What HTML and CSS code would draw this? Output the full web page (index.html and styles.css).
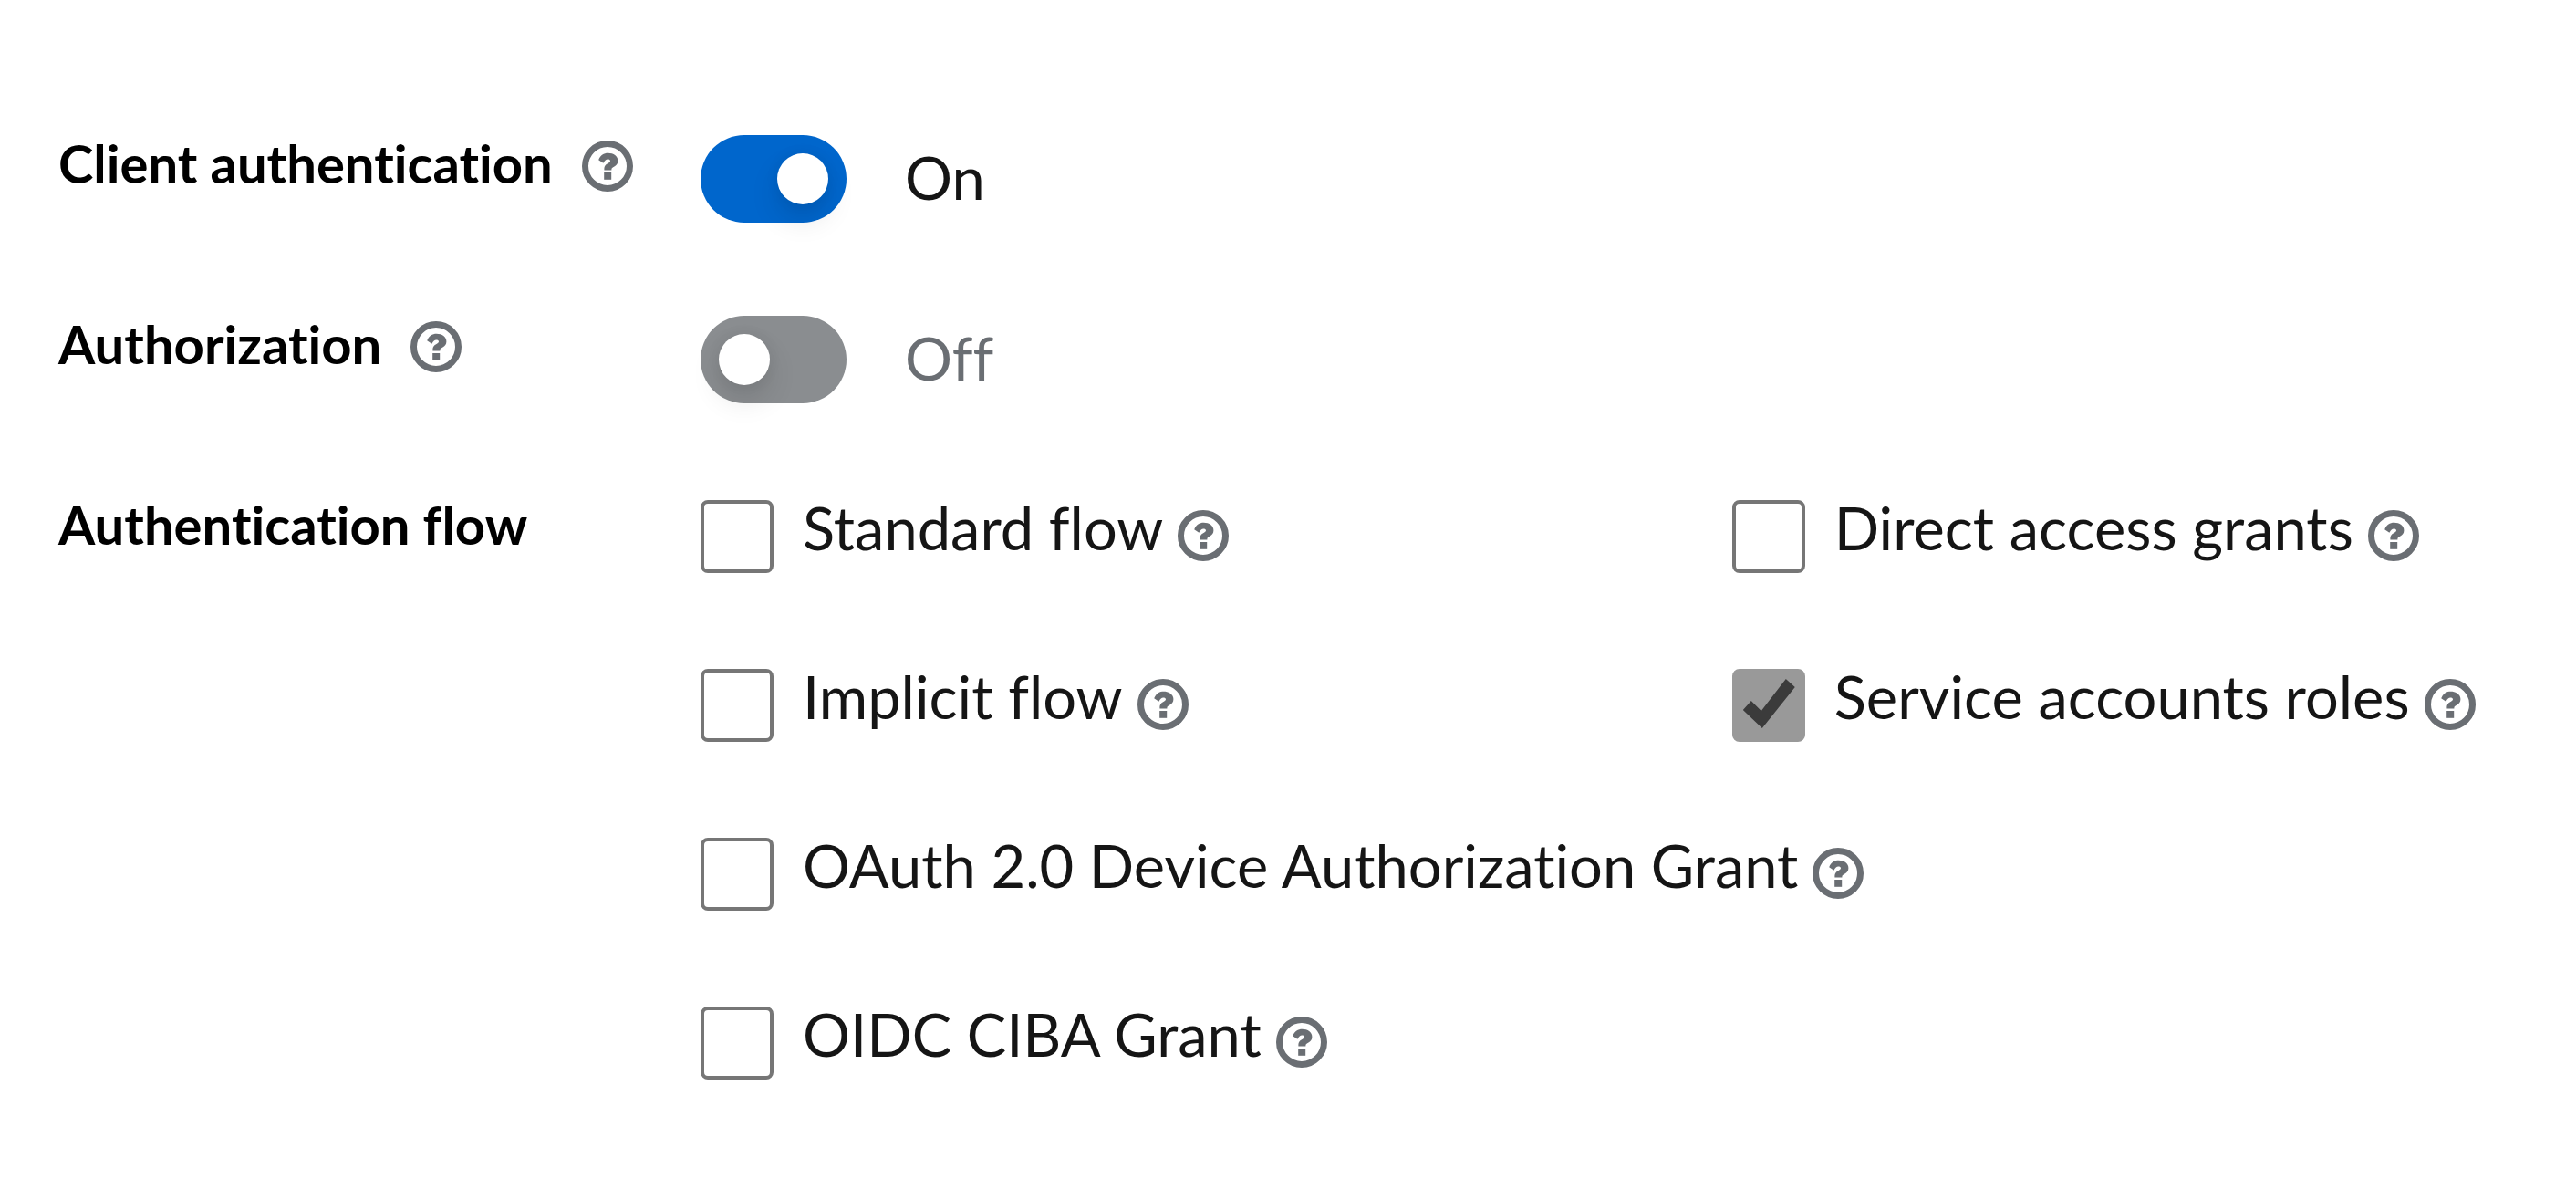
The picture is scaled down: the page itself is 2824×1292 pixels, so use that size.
FILE: index.html
```html
<!DOCTYPE html>
<html lang="en">
<head>
<meta charset="utf-8">
<meta name="viewport" content="width=device-width, initial-scale=1">
<title>Capability config</title>
<link rel="stylesheet" href="styles.css">
</head>
<body>
<svg class="sprite" aria-hidden="true">
  <symbol id="help" viewBox="0 0 56 56">
    <circle cx="28" cy="28" r="24.5" fill="none" stroke="currentColor" stroke-width="7"/>
    <path d="M18.2 21.2C20.4 16 23.8 13.8 28.6 13.8C34.6 13.8 39.4 17.2 39.4 22.2C39.4 28.6 32.4 28.8 32.4 31.4V32.6H24.4V30.6C24.4 25.2 31 24.8 31 22.4C31 21 29.8 20.4 28.2 20.4C26.4 20.4 25.2 21.4 23.4 24.8Z" fill="currentColor"/>
    <rect x="24.2" y="35" width="8" height="7.8" fill="currentColor"/>
  </symbol>
</svg>
<form class="form">
  <div class="form-row">
    <div class="form-label">
      <label for="client-auth">Client authentication</label>
      <button class="help" type="button" aria-label="Help for client authentication"><svg><use href="#help"/></svg></button>
    </div>
    <div class="switch">
      <input class="switch-input" type="checkbox" role="switch" id="client-auth" checked>
      <label class="switch-text" for="client-auth">On</label>
    </div>
  </div>
  <div class="form-row">
    <div class="form-label">
      <label for="authorization">Authorization</label>
      <button class="help" type="button" aria-label="Help for authorization"><svg><use href="#help"/></svg></button>
    </div>
    <div class="switch">
      <input class="switch-input" type="checkbox" role="switch" id="authorization">
      <label class="switch-text switch-text-off" for="authorization">Off</label>
    </div>
  </div>
  <div class="form-row" role="group" aria-labelledby="flow-label">
    <div class="form-label"><span id="flow-label">Authentication flow</span></div>
    <div class="flows">
      <div class="check">
        <input class="check-input" type="checkbox" id="standard">
        <label for="standard">Standard flow</label>
        <button class="help" type="button" aria-label="Help for standard flow"><svg><use href="#help"/></svg></button>
      </div>
      <div class="check">
        <input class="check-input" type="checkbox" id="direct">
        <label for="direct">Direct access grants</label>
        <button class="help" type="button" aria-label="Help for direct access grants"><svg><use href="#help"/></svg></button>
      </div>
      <div class="check">
        <input class="check-input" type="checkbox" id="implicit">
        <label for="implicit">Implicit flow</label>
        <button class="help" type="button" aria-label="Help for implicit flow"><svg><use href="#help"/></svg></button>
      </div>
      <div class="check">
        <input class="check-input" type="checkbox" id="service" checked disabled>
        <label for="service">Service accounts roles</label>
        <button class="help" type="button" aria-label="Help for service accounts roles"><svg><use href="#help"/></svg></button>
      </div>
      <div class="check check-wide">
        <input class="check-input" type="checkbox" id="device">
        <label for="device">OAuth 2.0 Device Authorization Grant</label>
        <button class="help" type="button" aria-label="Help for device authorization grant"><svg><use href="#help"/></svg></button>
      </div>
      <div class="check check-wide">
        <input class="check-input" type="checkbox" id="ciba">
        <label for="ciba">OIDC CIBA Grant</label>
        <button class="help" type="button" aria-label="Help for CIBA grant"><svg><use href="#help"/></svg></button>
      </div>
    </div>
  </div>
</form>
</body>
</html>
```
FILE: styles.css
```css
*,
*::before {
  box-sizing: border-box;
}

body {
  margin: 0;
  background: #fff;
  color: #151515;
  font-family: Lato, "Liberation Sans", sans-serif;
  font-size: 65px;
  font-variant-ligatures: none;
  line-height: 60px;
}

.sprite {
  display: none;
}

.form {
  display: flex;
  flex-direction: column;
  gap: 102px;
  padding: 148px 0 108px 64px;
}

.form-row {
  display: grid;
  grid-template-columns: 704px 1fr;
  align-items: start;
}

.form-label {
  display: flex;
  align-items: flex-end;
  gap: 32px;
  color: #000;
  font-size: 58px;
  font-weight: 700;
  line-height: 62px;
  white-space: nowrap;
}

.help {
  flex: none;
  width: 56px;
  height: 56px;
  padding: 0;
  border: 0;
  background: none;
  color: #6a6e73;
  cursor: pointer;
}

.help svg {
  display: block;
  width: 100%;
  height: 100%;
}

.switch {
  display: flex;
  align-items: flex-start;
  gap: 64px;
  line-height: 92px;
}

.switch-input {
  appearance: none;
  flex: none;
  width: 160px;
  height: 96px;
  margin: 0;
  padding: 20px;
  border-radius: 48px;
  background: #8a8d90;
}

.switch-input::before {
  content: "";
  display: block;
  width: 56px;
  height: 56px;
  border-radius: 50%;
  background: #fff;
  box-shadow: 0 16px 32px rgba(3, 3, 3, 0.12), 0 0 16px rgba(3, 3, 3, 0.06);
}

.switch-input:checked {
  background: #06c;
}

.switch-input:checked::before {
  margin-left: 64px;
}

.switch-text-off {
  color: #6a6e73;
}

.flows {
  display: grid;
  grid-template-columns: 55fr 45fr;
  row-gap: 105px;
  padding-top: 4px;
}

.check {
  display: flex;
  align-items: flex-start;
  gap: 16px;
  white-space: nowrap;
}

.check-wide {
  grid-column: 1 / -1;
}

.check-input {
  appearance: none;
  flex: none;
  width: 80px;
  height: 80px;
  margin: 0 16px 0 0;
  border: 4px solid #767676;
  border-radius: 8px;
  background: #fff;
}

.check-input:disabled {
  border-color: #999;
  background: #999;
}

.check-input:checked::before {
  content: "";
  display: block;
  width: 72px;
  height: 72px;
  background: #3b3b3b;
  clip-path: polygon(8px 41px, 17px 31px, 28px 42px, 55px 7px, 65px 16px, 29px 61px);
}

.check .help {
  margin-top: 11px;
}
```
